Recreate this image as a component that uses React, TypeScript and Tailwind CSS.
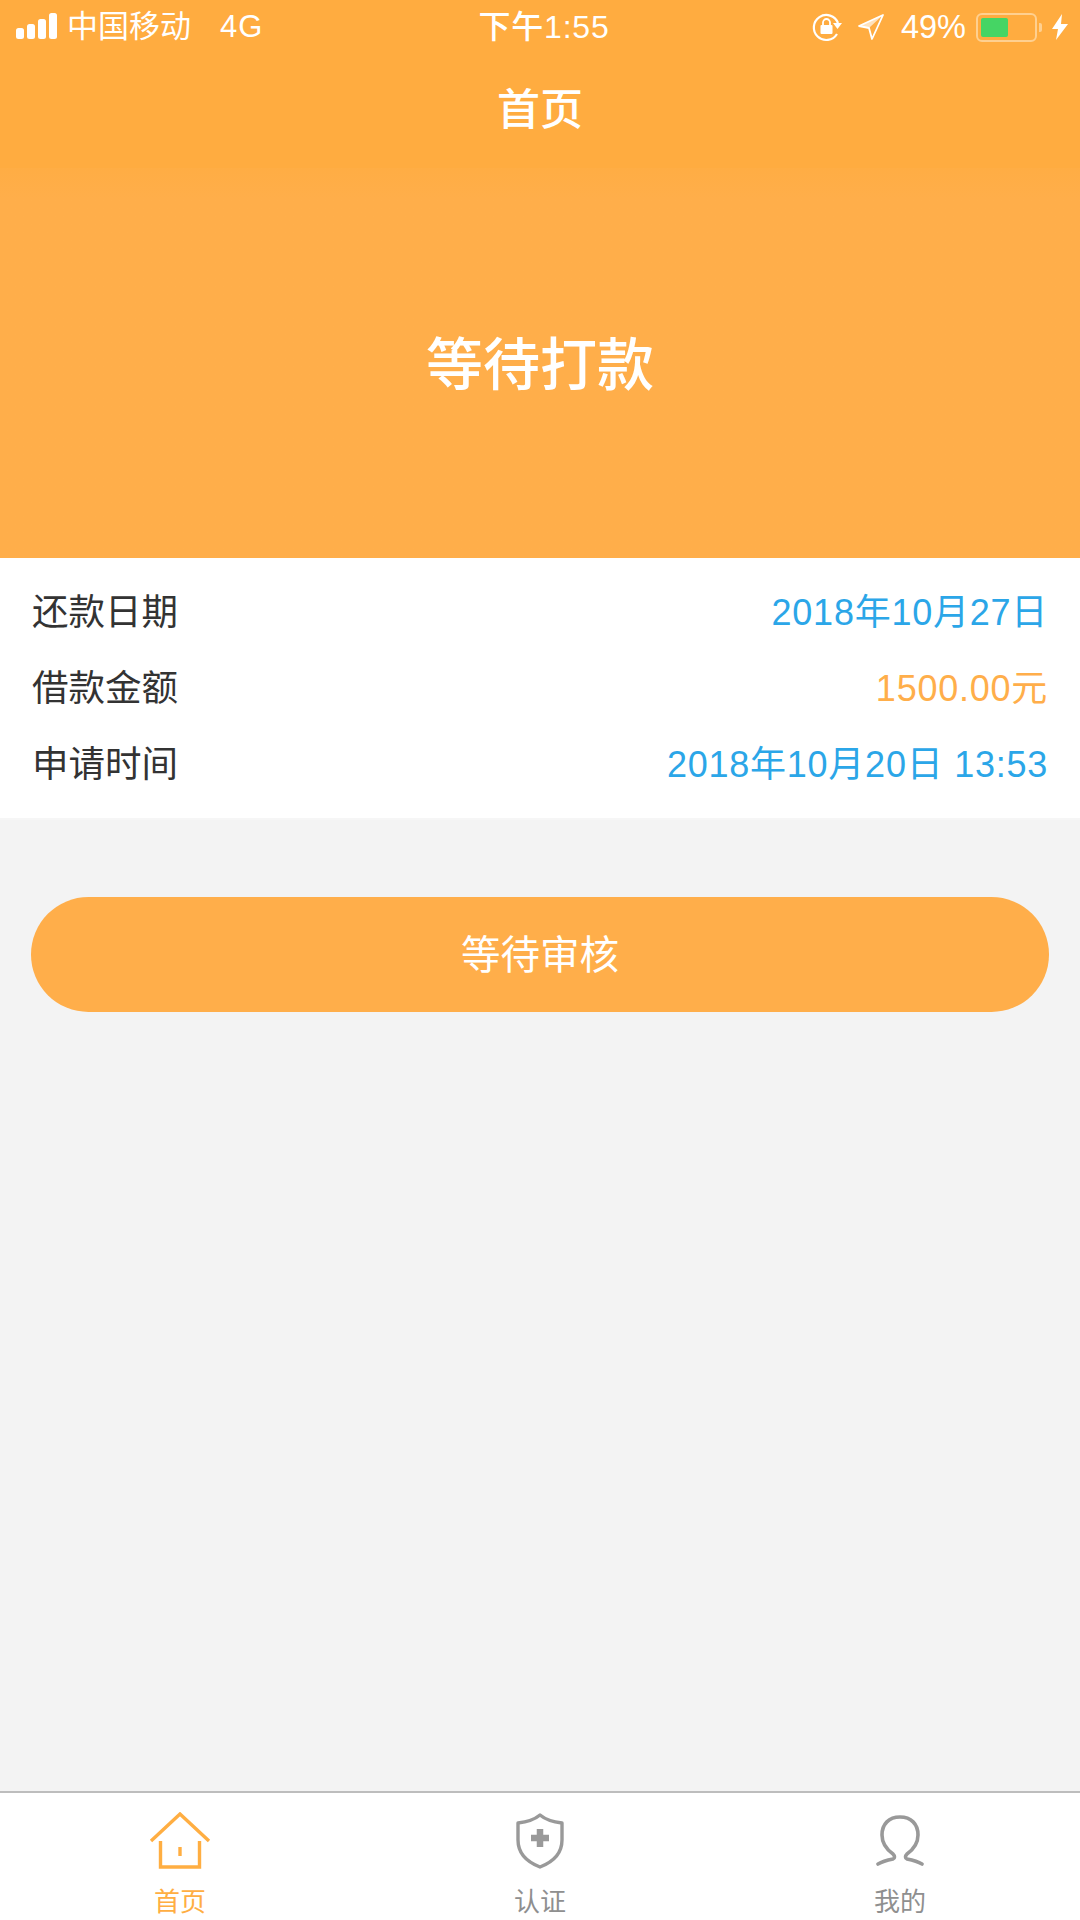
const cjk = "font-['Liberation_Sans','Noto_Sans_CJK_SC',sans-serif]"

const rows = [
  { label: '还款日期', value: '2018年10月27日', color: 'text-[#2ba6e8]' },
  { label: '借款金额', value: '1500.00元', color: 'text-[#ffae4a]' },
  { label: '申请时间', value: '2018年10月20日 13:53', color: 'text-[#2ba6e8]' },
]

function SignalBars() {
  return (
    <svg width="42" height="28" viewBox="0 0 42 28" fill="#fff">
      <rect x="0" y="15" width="8" height="11" rx="2.5" />
      <rect x="11" y="11" width="8" height="15" rx="2.5" />
      <rect x="22" y="6" width="8" height="20" rx="2.5" />
      <rect x="33" y="0" width="8" height="26" rx="2.5" />
    </svg>
  )
}

function LockRotation() {
  return (
    <svg width="32" height="30" viewBox="0 0 32 30" fill="none">
      <path d="M25 22a12.5 12.5 0 1 1 1-11" stroke="#fff" strokeWidth="2.2" />
      <path d="M21 11h9l-4.5 6z" fill="#fff" />
      <rect x="8.5" y="13" width="12" height="9" rx="1" fill="#fff" />
      <path d="M11 13v-2.5a3.5 3.5 0 0 1 7 0V13" stroke="#fff" strokeWidth="1.8" />
    </svg>
  )
}

function Location() {
  return (
    <svg width="26" height="26" viewBox="0 0 26 26" fill="none">
      <path d="M25 1 1 12l10 2 3 11z" stroke="#fff" strokeWidth="1.8" strokeLinejoin="round" />
      <path d="M25 1 1 12l10 2z" fill="#fff" opacity="0.65" />
    </svg>
  )
}

function Battery() {
  return (
    <div className="flex items-center gap-[2px]">
      <div className="w-[61px] h-[29px] rounded-[6px] border-2 border-[#ffd090] p-[3px]">
        <div className="w-[27px] h-full bg-[#45d564] rounded-[2px]" />
      </div>
      <div className="w-[3px] h-[9px] bg-[#ffd090] rounded-r-[2px]" />
    </div>
  )
}

function Bolt() {
  return (
    <svg width="16" height="26" viewBox="0 0 16 26" fill="#fff">
      <path d="M10 0 0 15h6l-2 11L16 10H9z" />
    </svg>
  )
}

function HomeIcon() {
  return (
    <svg width="62" height="58" viewBox="0 0 62 58" fill="none" stroke="#ffae42" strokeWidth="3.4">
      <path d="M2 29 31 2l29 27" />
      <path d="M11.5 29v26h39V29" />
      <path d="M31 35v9" />
    </svg>
  )
}

function ShieldIcon() {
  return (
    <svg width="50" height="56" viewBox="0 0 50 56" fill="none" stroke="#999" strokeWidth="3.4">
      <path d="M25 2c6 5 13 7 22 8v17c0 13-9 22-22 27C12 49 3 40 3 27V10c9-1 16-3 22-8z" strokeLinejoin="round" />
      <path d="M25 16v18M16 25h18" strokeWidth="6.5" />
    </svg>
  )
}

function UserIcon() {
  return (
    <svg width="48" height="54" viewBox="0 0 48 54" fill="none" stroke="#999" strokeWidth="3.6" strokeLinecap="round">
      <path d="M2 50c5-3 10-4 15-5 2-1 2-3 0-5C10 35 6 29 6 21 6 10 13 3 24 3s18 7 18 18c0 8-4 14-11 19-2 2-2 4 0 5 5 1 10 2 15 5" />
    </svg>
  )
}

const tabs = [
  { label: '首页', icon: <HomeIcon />, color: 'text-[#ffae42]' },
  { label: '认证', icon: <ShieldIcon />, color: 'text-[#8f8f8f]' },
  { label: '我的', icon: <UserIcon />, color: 'text-[#8f8f8f]' },
]

export default function App() {
  return (
    <div className={`w-[1080px] h-[1920px] flex flex-col bg-[#f3f3f3] ${cjk}`}>
      <div className="bg-[#ffac40] h-[168px] shrink-0 text-white">
        <div className="relative h-[54px] flex items-center justify-between pl-[16px] pr-[12px]">
          <div className="flex items-center gap-[9px] text-[31px]">
            <SignalBars />
            <span>中国移动</span>
            <span className="ml-[20px] tracking-[1px]">4G</span>
          </div>
          <div className="absolute left-[8px] right-0 text-center text-[32px] font-medium tracking-[0.8px]">下午1:55</div>
          <div className="flex items-center gap-[10px]">
            <LockRotation />
            <div className="ml-[4px]"><Location /></div>
            <span className="ml-[7px] text-[32.5px] leading-none">49%</span>
            <Battery />
            <Bolt />
          </div>
        </div>
        <div className="text-center text-[43px] font-medium leading-[60px] mt-[26px]">首页</div>
      </div>

      <div className="bg-linear-to-b from-[#ffad44] to-[#ffae4a] to-[8%] h-[390px] shrink-0 flex items-center justify-center text-white text-[57px] font-medium pt-[6px]">
        等待打款
      </div>

      <div className="bg-white h-[262px] shrink-0 pt-[17px] px-[32px] border-b-2 border-[#f6f6f6]">
        {rows.map((r) => (
          <div key={r.label} className="h-[76px] flex items-center justify-between text-[36px]">
            <span className="text-[36.5px] text-[#333]">{r.label}</span>
            <span className={`tracking-[0.75px] ${r.color}`}>{r.value}</span>
          </div>
        ))}
      </div>

      <div className="flex-1 px-[31px] pt-[77px]">
        <div className="h-[115px] rounded-full bg-[#ffae4a] flex items-center justify-center text-white text-[39.5px] pt-[2px]">
          等待审核
        </div>
      </div>

      <div className="h-[129px] shrink-0 bg-white border-t-2 border-[#bdbdbd] grid grid-cols-3">
        {tabs.map((t) => (
          <div key={t.label} className="flex flex-col items-center pt-[19px]">
            <div className="h-[58px] flex items-center">{t.icon}</div>
            <span className={`mt-[15px] text-[26px] leading-[34px] ${t.color}`}>{t.label}</span>
          </div>
        ))}
      </div>
    </div>
  )
}
